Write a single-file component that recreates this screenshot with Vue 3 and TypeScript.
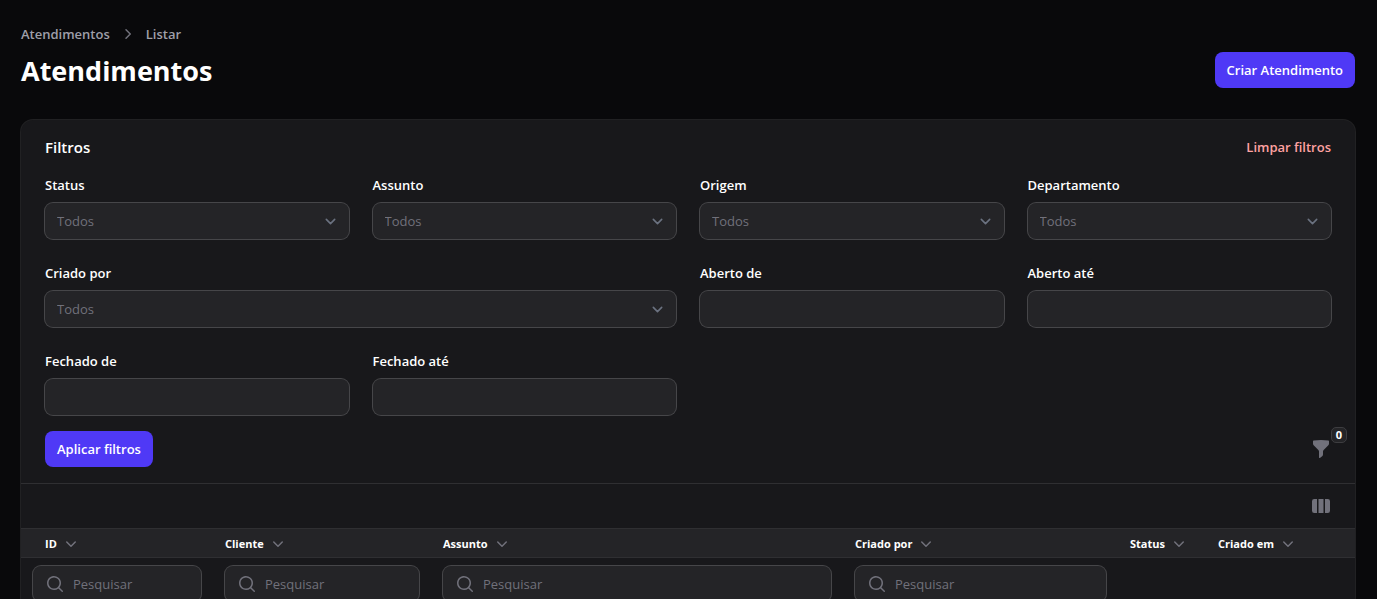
<script setup lang="ts">
interface FilterField {
  id: string
  label: string
  kind: 'select' | 'date'
  wide?: boolean
}

interface Column {
  id: string
  label: string
  searchable: boolean
}

const filters: FilterField[] = [
  { id: 'status', label: 'Status', kind: 'select' },
  { id: 'assunto', label: 'Assunto', kind: 'select' },
  { id: 'origem', label: 'Origem', kind: 'select' },
  { id: 'departamento', label: 'Departamento', kind: 'select' },
  { id: 'criado-por', label: 'Criado por', kind: 'select', wide: true },
  { id: 'aberto-de', label: 'Aberto de', kind: 'date' },
  { id: 'aberto-ate', label: 'Aberto até', kind: 'date' },
  { id: 'fechado-de', label: 'Fechado de', kind: 'date' },
  { id: 'fechado-ate', label: 'Fechado até', kind: 'date' },
]

const columns: Column[] = [
  { id: 'id', label: 'ID', searchable: true },
  { id: 'cliente', label: 'Cliente', searchable: true },
  { id: 'assunto', label: 'Assunto', searchable: true },
  { id: 'autor', label: 'Criado por', searchable: true },
  { id: 'status', label: 'Status', searchable: false },
  { id: 'data', label: 'Criado em', searchable: false },
]
</script>

<template>
  <main class="page">
    <header class="page-header">
      <div>
        <nav class="breadcrumbs">
          <a href="#">Atendimentos</a>
          <svg class="icon" viewBox="0 0 20 20" fill="none" stroke="currentColor" stroke-width="1.5" stroke-linecap="round" stroke-linejoin="round"><path d="M8 5.75 12.25 10 8 14.25" /></svg>
          <a href="#">Listar</a>
        </nav>
        <h1>Atendimentos</h1>
      </div>
      <button type="button" class="btn">Criar Atendimento</button>
    </header>

    <section class="card">
      <form class="filters" @submit.prevent>
        <div class="filters-head">
          <h2>Filtros</h2>
          <button type="reset" class="link-danger">Limpar filtros</button>
        </div>
        <div class="grid">
          <div v-for="field in filters" :key="field.id" class="field" :class="{ wide: field.wide }">
            <label :for="'filter-' + field.id">{{ field.label }}</label>
            <div v-if="field.kind === 'select'" class="control">
              <select :id="'filter-' + field.id">
                <option value="">Todos</option>
              </select>
              <svg class="select-arrow" viewBox="0 0 20 20" fill="none" stroke="currentColor" stroke-width="1.5" stroke-linecap="round" stroke-linejoin="round"><path d="m6 8 4 4 4-4" /></svg>
            </div>
            <div v-else class="control">
              <input :id="'filter-' + field.id" type="text" />
            </div>
          </div>
        </div>
        <div class="filters-foot">
          <button type="submit" class="btn">Aplicar filtros</button>
          <button type="button" class="icon-btn" aria-label="Filtrar">
            <svg class="icon" viewBox="0 0 20 20" fill="currentColor"><path fill-rule="evenodd" d="M2.628 1.601C5.028 1.206 7.49 1 10 1s4.973.206 7.372.601a.75.75 0 0 1 .628.74v2.288a2.25 2.25 0 0 1-.659 1.59l-4.682 4.683a2.25 2.25 0 0 0-.659 1.59v3.037c0 .684-.31 1.33-.844 1.757l-1.937 1.55A.75.75 0 0 1 8 18.25v-5.757a2.25 2.25 0 0 0-.659-1.591L2.659 6.22A2.25 2.25 0 0 1 2 4.629V2.34a.75.75 0 0 1 .628-.74Z" clip-rule="evenodd" /></svg>
            <span class="badge">0</span>
          </button>
        </div>
      </form>

      <div class="toolbar">
        <button type="button" class="icon-btn" aria-label="Colunas">
          <svg class="icon" viewBox="0 0 20 20" fill="currentColor"><path d="M14 17h2.75A2.25 2.25 0 0 0 19 14.75v-9.5A2.25 2.25 0 0 0 16.75 3H14v14ZM12.5 3h-5v14h5V3ZM3.25 3H6v14H3.25A2.25 2.25 0 0 1 1 14.75v-9.5A2.25 2.25 0 0 1 3.25 3Z" /></svg>
        </button>
      </div>

      <table>
        <colgroup>
          <col v-for="column in columns" :key="column.id" :class="'col-' + column.id" />
        </colgroup>
        <thead>
          <tr class="titles">
            <th v-for="column in columns" :key="column.id" scope="col">
              <button type="button" class="sort">
                {{ column.label }}
                <svg class="icon" viewBox="0 0 20 20" fill="none" stroke="currentColor" stroke-width="1.5" stroke-linecap="round" stroke-linejoin="round"><path d="M5.75 8 10 12.25 14.25 8" /></svg>
              </button>
            </th>
          </tr>
          <tr class="searches">
            <td v-for="column in columns" :key="column.id">
              <label v-if="column.searchable" class="control search">
                <svg class="icon" viewBox="0 0 20 20" fill="currentColor"><path fill-rule="evenodd" d="M9 3.5a5.5 5.5 0 1 0 0 11 5.5 5.5 0 0 0 0-11ZM2 9a7 7 0 1 1 12.452 4.391l3.328 3.329a.75.75 0 1 1-1.06 1.06l-3.329-3.328A7 7 0 0 1 2 9Z" clip-rule="evenodd" /></svg>
                <input type="search" placeholder="Pesquisar" :aria-label="'Pesquisar ' + column.label" />
              </label>
            </td>
          </tr>
        </thead>
      </table>
    </section>
  </main>
</template>

<style>
html {
  background: #09090b;
  scrollbar-width: none;
}
</style>

<style scoped>
.page {
  padding: 24px 22px 24px 21px;
  color: #fff;
  font: 400 13px/20px "Segoe UI", "Open Sans", "Noto Sans", sans-serif;
}

.page *,
.page *::before {
  box-sizing: border-box;
}

button,
input,
select {
  margin: 0;
  padding: 0;
  border: 0;
  background: none;
  color: inherit;
  font: inherit;
}

button {
  cursor: pointer;
}

h1,
h2 {
  margin: 0;
}

.icon {
  display: block;
  flex: none;
  width: 20px;
  height: 20px;
  color: #71717b;
}

.page-header {
  display: flex;
  align-items: flex-end;
  justify-content: space-between;
  margin-bottom: 30px;
}

.page-header .btn {
  margin-bottom: 2px;
}

.breadcrumbs {
  display: flex;
  align-items: center;
  gap: 8px;
  margin-bottom: 8px;
  font-weight: 600;
}

.breadcrumbs a {
  color: #9f9fa9;
  text-decoration: none;
}

h1 {
  font-size: 27px;
  line-height: 38px;
  font-weight: 700;
}

.btn {
  height: 36px;
  padding: 0 12px;
  border-radius: 8px;
  background: #4f39f6;
  font-weight: 600;
}

.card {
  overflow: hidden;
  border-radius: 12px;
  background: #18181b;
  box-shadow: 0 0 0 1px #212123;
}

.filters {
  padding: 15px 24px 16px;
}

.filters-head {
  display: flex;
  align-items: center;
  justify-content: space-between;
  margin-bottom: 16px;
}

h2 {
  font-size: 15px;
  line-height: 24px;
  font-weight: 600;
}

.link-danger {
  color: #ffa2a2;
  font-weight: 600;
}

.grid {
  display: grid;
  grid-template-columns: repeat(4, minmax(0, 1fr));
  gap: 24px;
}

.field {
  display: flex;
  flex-direction: column;
  gap: 8px;
}

.field.wide {
  grid-column: span 2;
}

.field label {
  font-weight: 600;
}

.control {
  position: relative;
  display: flex;
  align-items: center;
  height: 36px;
  border-radius: 8px;
  background: #242427;
  box-shadow: 0 0 0 1px #464649;
}

.control select,
.control input {
  appearance: none;
  flex: 1;
  min-width: 0;
  height: 36px;
  padding: 0 12px;
  outline: none;
}

.control select {
  color: #71717b;
}

.select-arrow {
  position: absolute;
  right: 8px;
  width: 21px;
  height: 21px;
  color: #6b7280;
  pointer-events: none;
}

.filters-foot {
  display: flex;
  align-items: center;
  justify-content: space-between;
  margin-top: 16px;
}

.icon-btn {
  position: relative;
}

.badge {
  position: absolute;
  top: -12px;
  right: -16px;
  width: 16px;
  height: 16px;
  border: 1px solid #3d3d40;
  border-radius: 5px;
  background: #242427;
  font-size: 11px;
  line-height: 14px;
  font-weight: 700;
  text-align: center;
}

.toolbar {
  display: flex;
  align-items: center;
  justify-content: flex-end;
  height: 45px;
  padding: 0 24px;
  border-top: 1px solid #2f2f32;
}

table {
  width: 100%;
  table-layout: fixed;
  border-collapse: separate;
  border-spacing: 0;
}

.col-id {
  width: 192px;
}

.col-cliente {
  width: 218px;
}

.col-autor {
  width: 275px;
}

.col-status {
  width: 88px;
}

.col-data {
  width: 149px;
}

th {
  height: 30px;
  padding: 2px 12px 0;
  border-top: 1px solid #2f2f32;
  border-bottom: 1px solid #2f2f32;
  background: #242427;
  text-align: left;
}

th:first-child {
  padding-left: 24px;
}

.sort {
  display: flex;
  align-items: center;
  gap: 4px;
  font-size: 11px;
  font-weight: 700;
  white-space: nowrap;
}

.searches td {
  padding: 8px 12px;
}

.search {
  padding-left: 12px;
}

.control.search input {
  padding: 0 12px 0 8px;
}

.search input::placeholder {
  color: #71717b;
  opacity: 1;
}
</style>
